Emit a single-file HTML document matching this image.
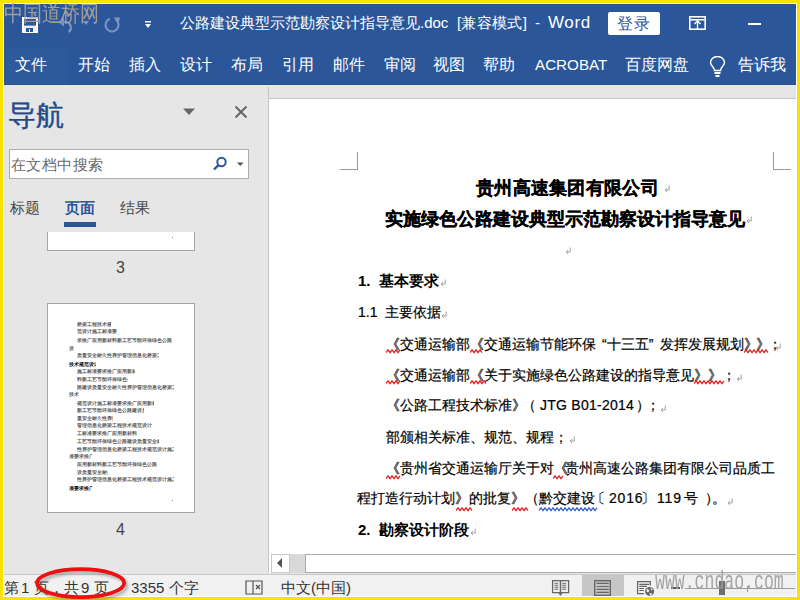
<!DOCTYPE html>
<html><head><meta charset="utf-8">
<style>
*{margin:0;padding:0;box-sizing:border-box}
html,body{width:800px;height:600px;overflow:hidden;background:#f8e200;font-family:"Liberation Sans",sans-serif}
body{position:relative}
.a{position:absolute;white-space:nowrap}
.w{color:#fff}
.tab{position:absolute;top:55px;color:#fff;font-size:16px;line-height:20px;white-space:nowrap}
.dt{position:absolute;white-space:nowrap;color:#000;font-size:14px;line-height:18px}
.pil{position:absolute;color:#9a9a9a;font-size:9px;line-height:10px}
.sq{position:absolute;height:4px}
.tl{position:absolute;height:2px;background:#8a8a8a}
</style></head><body>
<!-- frame -->
<div class="a" style="left:3px;top:3px;width:794px;height:594px;background:#fff"></div>
<!-- blue bars -->
<div class="a" style="left:4px;top:4px;width:792px;height:81px;background:#2b579a"></div>
<div class="a" style="left:4px;top:47px;width:64px;height:37px;background:#2d5a9c"></div>
<div class="a" style="left:4px;top:84px;width:792px;height:1px;background:#24508f"></div>

<!-- title bar icons -->
<svg class="a" style="left:22px;top:17px" width="16" height="16" viewBox="0 0 16 16">
  <rect x="1" y="1" width="14" height="14" fill="none" stroke="#fff" stroke-width="2"/>
  <rect x="1.5" y="8.6" width="13" height="6" fill="#eeeeee"/>
  <rect x="4" y="11" width="7" height="4" fill="#2b579a"/>
  <rect x="7" y="12" width="1" height="3" fill="#eeeeee"/>
</svg>
<svg class="a" style="left:56px;top:15px" width="18" height="20" viewBox="0 0 18 20">
  <path d="M6 7H9A5.5 5.5 0 0 1 12.5 17" fill="none" stroke="#7b93bf" stroke-width="2.2"/>
  <path d="M2 7L8 2.5V11.5Z" fill="#7b93bf"/>
</svg>
<svg class="a" style="left:83px;top:21px" width="6" height="4"><path d="M0 0H6L3 4Z" fill="#7d98c4"/></svg>
<svg class="a" style="left:103px;top:16px" width="18" height="18" viewBox="0 0 18 18">
  <path d="M6.8 2.9A6.5 6.5 0 1 0 13.2 4" fill="none" stroke="#7b93bf" stroke-width="2.2"/>
  <path d="M10.5 1.5L17 1.5L15.5 7.5Z" fill="#7b93bf"/>
</svg>
<svg class="a" style="left:145px;top:21px" width="6" height="8"><rect x="0" y="0" width="6" height="1.5" fill="#fff"/><path d="M0 3H6L3 7Z" fill="#fff"/></svg>

<div class="a w" style="left:180px;top:13px;font-size:15px;line-height:20px">公路建设典型示范勘察设计指导意见.doc</div>
<div class="a w" style="left:457px;top:13px;font-size:15px;line-height:20px;letter-spacing:0.3px">[兼容模式]</div>
<div class="a w" style="left:535px;top:13px;font-size:15px;line-height:20px">-</div>
<div class="a w" style="left:548px;top:13px;font-size:17px;line-height:20px;letter-spacing:0.6px">Word</div>

<div class="a" style="left:608px;top:12px;width:52px;height:23px;background:#fff;border-radius:2px"></div>
<div class="a" style="left:617px;top:14px;font-size:16px;line-height:20px;letter-spacing:1px;color:#2b579a">登录</div>
<svg class="a" style="left:689px;top:16px" width="17" height="14" viewBox="0 0 17 14">
  <rect x="0.8" y="0.8" width="15.4" height="12.4" fill="none" stroke="#fff" stroke-width="1.6"/>
  <rect x="1.5" y="3" width="14" height="1.6" fill="#fff"/>
  <path d="M8.5 5V13" stroke="#fff" stroke-width="1.3"/>
  <path d="M5.5 8L8.5 5L11.5 8" fill="none" stroke="#fff" stroke-width="1.5"/>
</svg>
<div class="a" style="left:748px;top:23px;width:13px;height:2px;background:#fff"></div>

<!-- tabs -->
<div class="tab" style="left:15px">文件</div>
<div class="tab" style="left:78px">开始</div>
<div class="tab" style="left:129px">插入</div>
<div class="tab" style="left:180px">设计</div>
<div class="tab" style="left:231px">布局</div>
<div class="tab" style="left:282px">引用</div>
<div class="tab" style="left:333px">邮件</div>
<div class="tab" style="left:384px">审阅</div>
<div class="tab" style="left:433px">视图</div>
<div class="tab" style="left:483px">帮助</div>
<div class="tab" style="left:535px;font-size:15.2px">ACROBAT</div>
<div class="tab" style="left:625px">百度网盘</div>
<svg class="a" style="left:709px;top:56px" width="17" height="22" viewBox="0 0 17 22">
  <path d="M5.5 14.5 C5.5 11 1.5 9.5 1.5 6.5 A7 6 0 0 1 15.5 6.5 C15.5 9.5 11.5 11 11.5 14.5 Z" fill="none" stroke="#fff" stroke-width="1.5"/>
  <rect x="5.5" y="16" width="6" height="2" fill="#fff"/>
  <rect x="6.5" y="19" width="4" height="2" fill="#fff"/>
</svg>
<div class="tab" style="left:738px">告诉我</div>

<!-- main grey area -->
<div class="a" style="left:4px;top:85px;width:792px;height:489px;background:#e6e6e6"></div>
<div class="a" style="left:4px;top:85px;width:792px;height:1px;background:#ece9e7"></div>
<!-- nav pane -->
<div class="a" style="left:8px;top:99px;font-size:28px;line-height:34px;color:#1f4b8c;-webkit-text-stroke:0.4px #1f4b8c">导航</div>
<svg class="a" style="left:183px;top:108px" width="13" height="8"><path d="M0 0.5H12L6 7Z" fill="#666"/></svg>
<svg class="a" style="left:234px;top:105px" width="14" height="14" viewBox="0 0 14 14"><path d="M1.5 1.5L12.5 12.5M12.5 1.5L1.5 12.5" stroke="#666" stroke-width="2"/></svg>

<div class="a" style="left:9px;top:149px;width:240px;height:30px;background:#fff;border:1px solid #ababab"></div>
<div class="a" style="left:11px;top:156px;font-size:15px;letter-spacing:0.45px;line-height:18px;color:#6a6a6a">在文档中搜索</div>
<svg class="a" style="left:212px;top:156px" width="16" height="16" viewBox="0 0 16 16">
  <circle cx="9.5" cy="6" r="4.2" fill="none" stroke="#2b579a" stroke-width="2"/>
  <path d="M6.5 9L2 13.5" stroke="#2b579a" stroke-width="2.4"/>
</svg>
<svg class="a" style="left:237px;top:162px" width="8" height="5"><path d="M0 0.5H6.5L3.25 4Z" fill="#555"/></svg>

<div class="a" style="left:10px;top:199px;font-size:15px;line-height:18px;color:#444">标题</div>
<div class="a" style="left:65px;top:199px;font-size:15px;line-height:18px;color:#2b579a;font-weight:bold">页面</div>
<div class="a" style="left:120px;top:199px;font-size:15px;line-height:18px;color:#444">结果</div>
<div class="a" style="left:64px;top:222px;width:32px;height:5px;background:#2b579a"></div>

<!-- thumbnail 3 (bottom part) -->
<div class="a" style="left:47px;top:232px;width:148px;height:19px;background:#fff;border:1px solid #a2a6ad;border-top:none"></div>
<div class="a" style="left:172px;top:237px;width:1px;height:1px;background:#888"></div>
<div class="a" style="left:116px;top:259px;font-size:16px;line-height:18px;color:#444">3</div>

<!-- thumbnail 4 -->
<div class="a" style="left:47px;top:303px;width:148px;height:210px;background:#fff;border:1px solid #a2a6ad"></div>
<div class="a" style="left:76.8px;top:321.6px;width:34.2px;overflow:hidden;font-size:4.6px;line-height:6px;font-weight:bold;color:#5a5a5a;">桥梁工程技术规</div>
<div class="a" style="left:76.8px;top:329.4px;width:40.0px;overflow:hidden;font-size:4.6px;line-height:6px;font-weight:bold;color:#5a5a5a;">范设计施工标准要</div>
<div class="a" style="left:76.8px;top:338.1px;width:95.0px;overflow:hidden;font-size:4.6px;line-height:6px;font-weight:bold;color:#5a5a5a;">求推广应用新材料新工艺节能环保绿色公路建</div>
<div class="a" style="left:69.0px;top:345.9px;width:4.5px;overflow:hidden;font-size:4.6px;line-height:6px;font-weight:bold;color:#5a5a5a;">设</div>
<div class="a" style="left:76.8px;top:353.3px;width:82.0px;overflow:hidden;font-size:4.6px;line-height:6px;font-weight:bold;color:#5a5a5a;">质量安全耐久性养护管理信息化桥梁工程</div>
<div class="a" style="left:69.0px;top:361.5px;width:27.0px;overflow:hidden;font-size:4.6px;line-height:6px;font-weight:bold;color:#000;">技术规范设计</div>
<div class="a" style="left:76.8px;top:369.3px;width:58.2px;overflow:hidden;font-size:4.6px;line-height:6px;font-weight:bold;color:#5a5a5a;">施工标准要求推广应用新材</div>
<div class="a" style="left:76.8px;top:376.7px;width:51.7px;overflow:hidden;font-size:4.6px;line-height:6px;font-weight:bold;color:#5a5a5a;">料新工艺节能环保绿色公</div>
<div class="a" style="left:76.8px;top:384.5px;width:97.2px;overflow:hidden;font-size:4.6px;line-height:6px;font-weight:bold;color:#5a5a5a;">路建设质量安全耐久性养护管理信息化桥梁工程</div>
<div class="a" style="left:69.0px;top:392.3px;width:9.7px;overflow:hidden;font-size:4.6px;line-height:6px;font-weight:bold;color:#5a5a5a;">技术</div>
<div class="a" style="left:76.8px;top:400.5px;width:77.7px;overflow:hidden;font-size:4.6px;line-height:6px;font-weight:bold;color:#5a5a5a;">规范设计施工标准要求推广应用新材料</div>
<div class="a" style="left:76.8px;top:407.8px;width:66.8px;overflow:hidden;font-size:4.6px;line-height:6px;font-weight:bold;color:#5a5a5a;">新工艺节能环保绿色公路建设质</div>
<div class="a" style="left:76.8px;top:415.6px;width:36.5px;overflow:hidden;font-size:4.6px;line-height:6px;font-weight:bold;color:#5a5a5a;">量安全耐久性养护</div>
<div class="a" style="left:76.8px;top:423.4px;width:75.2px;overflow:hidden;font-size:4.6px;line-height:6px;font-weight:bold;color:#5a5a5a;">管理信息化桥梁工程技术规范设计施</div>
<div class="a" style="left:76.8px;top:431.2px;width:60.2px;overflow:hidden;font-size:4.6px;line-height:6px;font-weight:bold;color:#5a5a5a;">工标准要求推广应用新材料新</div>
<div class="a" style="left:76.8px;top:439.0px;width:82.0px;overflow:hidden;font-size:4.6px;line-height:6px;font-weight:bold;color:#5a5a5a;">工艺节能环保绿色公路建设质量安全耐久</div>
<div class="a" style="left:76.8px;top:446.8px;width:97.2px;overflow:hidden;font-size:4.6px;line-height:6px;font-weight:bold;color:#5a5a5a;">性养护管理信息化桥梁工程技术规范设计施工标</div>
<div class="a" style="left:69.0px;top:454.2px;width:22.7px;overflow:hidden;font-size:4.6px;line-height:6px;font-weight:bold;color:#5a5a5a;">准要求推广</div>
<div class="a" style="left:76.8px;top:462.0px;width:79.8px;overflow:hidden;font-size:4.6px;line-height:6px;font-weight:bold;color:#5a5a5a;">应用新材料新工艺节能环保绿色公路建</div>
<div class="a" style="left:76.8px;top:469.8px;width:31.2px;overflow:hidden;font-size:4.6px;line-height:6px;font-weight:bold;color:#5a5a5a;">设质量安全耐久</div>
<div class="a" style="left:76.8px;top:477.2px;width:97.2px;overflow:hidden;font-size:4.6px;line-height:6px;font-weight:bold;color:#5a5a5a;">性养护管理信息化桥梁工程技术规范设计施工标</div>
<div class="a" style="left:69.0px;top:485.8px;width:22.7px;overflow:hidden;font-size:4.6px;line-height:6px;font-weight:bold;color:#000;">准要求推广</div>
<div class="a" style="left:172px;top:500px;width:1px;height:1px;background:#888"></div>
<div class="a" style="left:116px;top:521px;font-size:16px;line-height:18px;color:#444">4</div>

<!-- splitter -->
<div class="a" style="left:268px;top:87px;width:1px;height:485px;background:#c4c4c4"></div>
<!-- doc area -->
<div class="a" style="left:269px;top:98px;width:527px;height:1px;background:#c4c4c4"></div>
<div class="a" style="left:269px;top:99px;width:527px;height:455px;background:#fff"></div>

<!-- corner marks -->
<div class="a" style="left:357px;top:152px;width:1px;height:18px;background:#9a9a9a"></div>
<div class="a" style="left:340px;top:169px;width:18px;height:1px;background:#9a9a9a"></div>
<div class="a" style="left:773px;top:152px;width:1px;height:18px;background:#9a9a9a"></div>
<div class="a" style="left:773px;top:169px;width:18px;height:1px;background:#9a9a9a"></div>

<!-- document text -->
<div class="a" style="left:476px;top:177px;font-size:18px;line-height:22px;color:#000;font-weight:bold;letter-spacing:0.3px;-webkit-text-stroke:0.25px #000">贵州高速集团有限公司</div>
<svg class="a" style="left:664px;top:185px" width="7" height="8" viewBox="0 0 7 8"><path d="M5.2 0.5V5H1.2M3 3.1L1.1 5L3 6.9" fill="none" stroke="#959595" stroke-width="0.9"/></svg>
<div class="a" style="left:385px;top:208px;font-size:18px;line-height:22px;color:#000;font-weight:bold;-webkit-text-stroke:0.25px #000">实施绿色公路建设典型示范勘察设计指导意见</div>
<svg class="a" style="left:746px;top:216px" width="7" height="8" viewBox="0 0 7 8"><path d="M5.2 0.5V5H1.2M3 3.1L1.1 5L3 6.9" fill="none" stroke="#959595" stroke-width="0.9"/></svg>
<svg class="a" style="left:565px;top:247px" width="7" height="8" viewBox="0 0 7 8"><path d="M5.2 0.5V5H1.2M3 3.1L1.1 5L3 6.9" fill="none" stroke="#959595" stroke-width="0.9"/></svg>
<div class="a" style="left:358px;top:271px;font-size:15px;line-height:19px;color:#000;font-weight:bold;">1.&nbsp;&nbsp;基本要求</div>
<svg class="a" style="left:440px;top:279px" width="7" height="8" viewBox="0 0 7 8"><path d="M5.2 0.5V5H1.2M3 3.1L1.1 5L3 6.9" fill="none" stroke="#959595" stroke-width="0.9"/></svg>
<div class="a" style="left:358px;top:303px;font-size:14px;line-height:18px;color:#000;-webkit-text-stroke:0.2px #000;">1.1&nbsp;&nbsp;主要依据</div>
<svg class="a" style="left:441px;top:311px" width="7" height="8" viewBox="0 0 7 8"><path d="M5.2 0.5V5H1.2M3 3.1L1.1 5L3 6.9" fill="none" stroke="#959595" stroke-width="0.9"/></svg>
<div class="a" style="left:386px;top:335px;font-size:14px;line-height:18px;color:#000;-webkit-text-stroke:0.2px #000;">《交通运输部《交通运输节能环保<span style="padding-left:6px">“</span>十三五<span style="padding-right:7px">”</span>发挥发展规划<span style="letter-spacing:-2px">》》</span>；</div>
<svg class="a" style="left:775px;top:343px" width="7" height="8" viewBox="0 0 7 8"><path d="M5.2 0.5V5H1.2M3 3.1L1.1 5L3 6.9" fill="none" stroke="#959595" stroke-width="0.9"/></svg>
<svg class="a" style="left:386px;top:349px" width="16" height="5"><polyline points="0,3.6 2,0.8 4,3.6 6,0.8 8,3.6 10,0.8 12,3.6 14,0.8" fill="none" stroke="#e81c1c" stroke-width="1.2"/></svg>
<svg class="a" style="left:470px;top:349px" width="14" height="5"><polyline points="0,3.6 2,0.8 4,3.6 6,0.8 8,3.6 10,0.8 12,3.6" fill="none" stroke="#e81c1c" stroke-width="1.2"/></svg>
<svg class="a" style="left:744px;top:349px" width="25" height="5"><polyline points="0,3.6 2,0.8 4,3.6 6,0.8 8,3.6 10,0.8 12,3.6 14,0.8 16,3.6 18,0.8 20,3.6 22,0.8 24,3.6" fill="none" stroke="#e81c1c" stroke-width="1.2"/></svg>
<div class="a" style="left:386px;top:366px;font-size:14px;line-height:18px;color:#000;-webkit-text-stroke:0.2px #000;">《交通运输部《关于实施绿色公路建设的指导意见》》；</div>
<svg class="a" style="left:736px;top:374px" width="7" height="8" viewBox="0 0 7 8"><path d="M5.2 0.5V5H1.2M3 3.1L1.1 5L3 6.9" fill="none" stroke="#959595" stroke-width="0.9"/></svg>
<svg class="a" style="left:386px;top:380px" width="16" height="5"><polyline points="0,3.6 2,0.8 4,3.6 6,0.8 8,3.6 10,0.8 12,3.6 14,0.8" fill="none" stroke="#e81c1c" stroke-width="1.2"/></svg>
<svg class="a" style="left:470px;top:380px" width="17" height="5"><polyline points="0,3.6 2,0.8 4,3.6 6,0.8 8,3.6 10,0.8 12,3.6 14,0.8 16,3.6" fill="none" stroke="#e81c1c" stroke-width="1.2"/></svg>
<svg class="a" style="left:694px;top:380px" width="31" height="5"><polyline points="0,3.6 2,0.8 4,3.6 6,0.8 8,3.6 10,0.8 12,3.6 14,0.8 16,3.6 18,0.8 20,3.6 22,0.8 24,3.6 26,0.8 28,3.6 30,0.8" fill="none" stroke="#e81c1c" stroke-width="1.2"/></svg>
<div class="a" style="left:386px;top:396px;font-size:14px;line-height:18px;color:#000;-webkit-text-stroke:0.2px #000;">《公路工程技术标准》</div>
<div class="a" style="left:522px;top:396px;font-size:14px;line-height:18px;color:#000;-webkit-text-stroke:0.2px #000;">（</div>
<div class="a" style="left:540px;top:396px;font-size:14px;line-height:18px;color:#000;-webkit-text-stroke:0.2px #000;letter-spacing:0.25px">JTG B01-2014</div>
<div class="a" style="left:636px;top:396px;font-size:14px;line-height:18px;color:#000;-webkit-text-stroke:0.2px #000;">）</div>
<div class="a" style="left:646px;top:396px;font-size:14px;line-height:18px;color:#000;-webkit-text-stroke:0.2px #000;">；</div>
<svg class="a" style="left:660px;top:405px" width="7" height="8" viewBox="0 0 7 8"><path d="M5.2 0.5V5H1.2M3 3.1L1.1 5L3 6.9" fill="none" stroke="#959595" stroke-width="0.9"/></svg>
<div class="a" style="left:386px;top:428px;font-size:14px;line-height:18px;color:#000;-webkit-text-stroke:0.2px #000;">部颁相关标准、规范、规程；</div>
<svg class="a" style="left:569px;top:436px" width="7" height="8" viewBox="0 0 7 8"><path d="M5.2 0.5V5H1.2M3 3.1L1.1 5L3 6.9" fill="none" stroke="#959595" stroke-width="0.9"/></svg>
<div class="a" style="left:386px;top:459px;font-size:14px;line-height:18px;color:#000;-webkit-text-stroke:0.2px #000;">《贵州省交通运输厅关于对<span style="letter-spacing:-3.5px">《</span>贵州高速公路集团有限公司品质工</div>
<svg class="a" style="left:386px;top:475px" width="16" height="5"><polyline points="0,3.6 2,0.8 4,3.6 6,0.8 8,3.6 10,0.8 12,3.6 14,0.8" fill="none" stroke="#e81c1c" stroke-width="1.2"/></svg>
<svg class="a" style="left:553px;top:475px" width="12" height="5"><polyline points="0,3.6 2,0.8 4,3.6 6,0.8 8,3.6 10,0.8" fill="none" stroke="#e81c1c" stroke-width="1.2"/></svg>
<div class="a" style="left:357px;top:489px;font-size:14px;line-height:18px;color:#000;-webkit-text-stroke:0.2px #000;">程打造行动计划》的批复》（黔交建设</div>
<div class="a" style="left:591px;top:489px;font-size:14px;line-height:18px;color:#000;-webkit-text-stroke:0.2px #000;">〔</div>
<div class="a" style="left:609px;top:489px;font-size:14px;line-height:18px;color:#000;-webkit-text-stroke:0.2px #000;letter-spacing:0.8px">2016</div>
<div class="a" style="left:641px;top:489px;font-size:14px;line-height:18px;color:#000;-webkit-text-stroke:0.2px #000;">〕</div>
<div class="a" style="left:657px;top:489px;font-size:14px;line-height:18px;color:#000;-webkit-text-stroke:0.2px #000;letter-spacing:0.8px">119</div>
<div class="a" style="left:684px;top:489px;font-size:14px;line-height:18px;color:#000;-webkit-text-stroke:0.2px #000;">号</div>
<div class="a" style="left:705px;top:489px;font-size:14px;line-height:18px;color:#000;-webkit-text-stroke:0.2px #000;">）</div>
<div class="a" style="left:712px;top:489px;font-size:14px;line-height:18px;color:#000;-webkit-text-stroke:0.2px #000;">。</div>
<svg class="a" style="left:456px;top:507px" width="17" height="5"><polyline points="0,3.6 2,0.8 4,3.6 6,0.8 8,3.6 10,0.8 12,3.6 14,0.8 16,3.6" fill="none" stroke="#e81c1c" stroke-width="1.2"/></svg>
<svg class="a" style="left:512px;top:507px" width="17" height="5"><polyline points="0,3.6 2,0.8 4,3.6 6,0.8 8,3.6 10,0.8 12,3.6 14,0.8 16,3.6" fill="none" stroke="#e81c1c" stroke-width="1.2"/></svg>
<svg class="a" style="left:539px;top:507px" width="60" height="5"><polyline points="0,3.6 2,0.8 4,3.6 6,0.8 8,3.6 10,0.8 12,3.6 14,0.8 16,3.6 18,0.8 20,3.6 22,0.8 24,3.6 26,0.8 28,3.6 30,0.8 32,3.6 34,0.8 36,3.6 38,0.8 40,3.6 42,0.8 44,3.6 46,0.8 48,3.6 50,0.8 52,3.6 54,0.8 56,3.6 58,0.8" fill="none" stroke="#3060d0" stroke-width="1.2"/></svg>
<svg class="a" style="left:727px;top:498px" width="7" height="8" viewBox="0 0 7 8"><path d="M5.2 0.5V5H1.2M3 3.1L1.1 5L3 6.9" fill="none" stroke="#959595" stroke-width="0.9"/></svg>
<div class="a" style="left:358px;top:520px;font-size:15px;line-height:19px;color:#000;font-weight:bold;">2.&nbsp;&nbsp;勘察设计阶段</div>
<svg class="a" style="left:470px;top:528px" width="7" height="8" viewBox="0 0 7 8"><path d="M5.2 0.5V5H1.2M3 3.1L1.1 5L3 6.9" fill="none" stroke="#959595" stroke-width="0.9"/></svg>

<!-- horizontal scrollbar -->
<div class="a" style="left:269px;top:554px;width:527px;height:19px;background:#fff"></div>
<div class="a" style="left:271px;top:554px;width:19px;height:19px;background:#fff;border:1px solid #c8c8c8"></div>
<svg class="a" style="left:277px;top:558px" width="6" height="10"><path d="M5 0V10L0 5Z" fill="#555"/></svg>
<div class="a" style="left:290px;top:554px;width:15px;height:19px;background:#d9d9d9"></div>
<div class="a" style="left:305px;top:554px;width:491px;height:19px;background:#fff;border:1px solid #ababab;border-right:none"></div>

<!-- status bar -->
<div class="a" style="left:4px;top:574px;width:792px;height:22px;background:#f1f1f1;border-top:1px solid #c8c8c8"></div>
<div class="a" style="left:4px;top:579px;font-size:15px;line-height:18px;color:#333;">第</div>
<div class="a" style="left:21px;top:579px;font-size:15px;line-height:18px;color:#333;">1</div>
<div class="a" style="left:34px;top:579px;font-size:15px;line-height:18px;color:#333;">页</div>
<div class="a" style="left:49px;top:579px;font-size:15px;line-height:18px;color:#333;">，</div>
<div class="a" style="left:64px;top:579px;font-size:15px;line-height:18px;color:#333;">共</div>
<div class="a" style="left:81px;top:579px;font-size:15px;line-height:18px;color:#333;">9</div>
<div class="a" style="left:94px;top:579px;font-size:15px;line-height:18px;color:#333;">页</div>
<div class="a" style="left:131px;top:579px;font-size:15px;line-height:18px;color:#333;">3355&nbsp;个字</div>
<div class="a" style="left:281px;top:579px;font-size:15px;line-height:18px;color:#333;">中文(中国)</div>
<svg class="a" style="left:245px;top:580px" width="18" height="15" viewBox="0 0 18 15">
<path d="M1 1H8V14H1Z M8 1H17V14H8" fill="none" stroke="#555" stroke-width="1.2"/>
<path d="M11 5L15 9M15 5L11 9" stroke="#555" stroke-width="1.3"/></svg>
<div class="a" style="left:582px;top:575px;width:42px;height:21px;background:#c6c6c6"></div>
<svg class="a" style="left:551px;top:579px" width="19" height="17" viewBox="0 0 19 17">
<path d="M1.6 1.6H9.5V13.6H1.6Z M9.5 1.6H17.6V13.6H9.5" fill="none" stroke="#666" stroke-width="1.3"/>
<path d="M3.5 4.2H7.3M3.5 6.2H7.3M3.5 8.2H7.3M3.5 10.3H7.3M11.2 4.2H15.2M11.2 6.2H15.2M11.2 8.2H15.2M11.2 10.3H15.2" stroke="#666" stroke-width="1.1"/>
<path d="M9.5 1V15.5M8 14L9.5 16L11 14" fill="none" stroke="#666" stroke-width="1.2"/></svg>
<svg class="a" style="left:594px;top:580px" width="17" height="16" viewBox="0 0 17 16">
<rect x="0.7" y="0.7" width="15.6" height="14.6" fill="none" stroke="#666" stroke-width="1.4"/>
<path d="M2.5 3.4H14.7M2.5 6.5H14.7M2.5 9.4H14.7M2.5 12.4H14.7" stroke="#666" stroke-width="1.2"/></svg>
<svg class="a" style="left:636px;top:580px" width="20" height="17" viewBox="0 0 20 17">
<path d="M8 13.6H1.6V1.6H14.3V5.5" fill="none" stroke="#666" stroke-width="1.3"/>
<path d="M3.3 4.4H13M3.3 6.4H11M3.3 8.5H8M3.3 10.5H8" stroke="#666" stroke-width="1.2"/>
<circle cx="13.6" cy="11.4" r="4.5" fill="#666"/>
<path d="M11 8.6L13.5 10.5L12.2 12.5L10.5 11.5Z M14.5 7.5L16.8 9.5L15.3 10.6Z M13.5 13.5L15.5 13L15.8 15.2L14 15.5Z" fill="#f1f1f1"/></svg>
<div class="a" style="left:671px;top:587px;width:9px;height:2px;background:#555"></div>
<div class="a" style="left:685px;top:588px;width:110px;height:1px;background:#9a9a9a"></div>
<div class="a" style="left:747px;top:586px;width:1px;height:6px;background:#9a9a9a"></div>
<div class="a" style="left:719px;top:581px;width:6px;height:14px;background:#6e6e6e"></div>
<div class="a" style="left:655px;top:578px;font-family:'Liberation Mono',monospace;font-size:16.5px;line-height:20px;color:#9c9c9c;transform:scaleY(1.55);transform-origin:0 100%;opacity:0.9">www.cndao.com</div>
<div class="a" style="left:4px;top:1px;font-size:19px;line-height:22px;color:#a39f98;letter-spacing:0px;font-family:'Liberation Serif',serif;transform:scaleY(1.15);transform-origin:0 0">中国道桥网</div>
<svg class="a" style="left:0px;top:555px;overflow:visible" width="140" height="50" viewBox="0 555 140 50">
<defs><filter id="sh" x="-20%" y="-50%" width="140%" height="200%"><feGaussianBlur stdDeviation="1.6"/></filter></defs>
<ellipse cx="83" cy="586" rx="43.6" ry="14" fill="none" stroke="#777" stroke-opacity="0.55" stroke-width="3.5" filter="url(#sh)"/>
<ellipse cx="80.6" cy="583.1" rx="43.6" ry="14" fill="none" stroke="#ee1010" stroke-width="3.8"/>
</svg>

</body></html>
